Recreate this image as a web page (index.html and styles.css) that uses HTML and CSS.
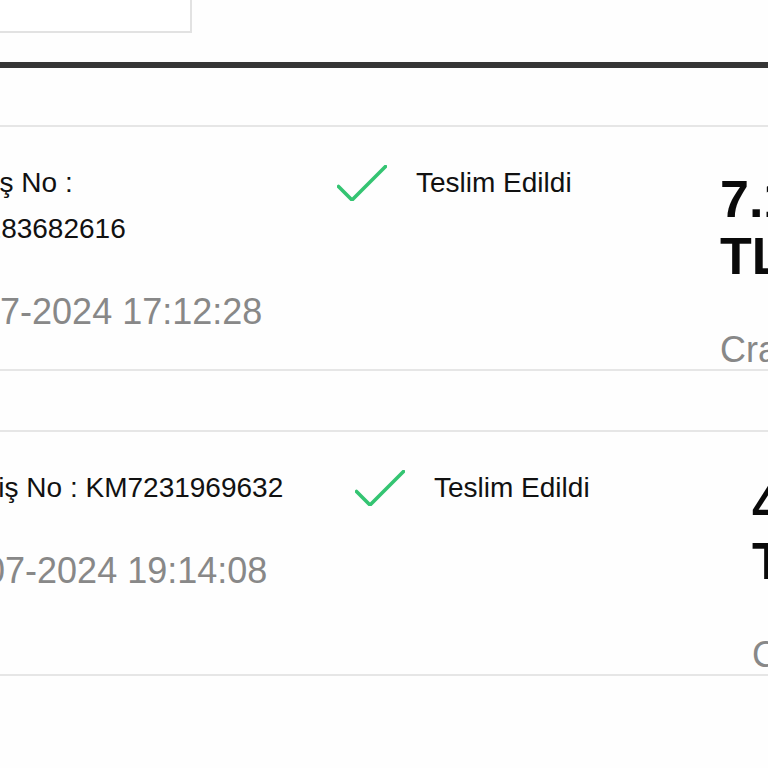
FILE: index.html
```html
<!DOCTYPE html>
<html lang="tr">
<head>
<meta charset="utf-8">
<title>Siparişlerim</title>
<link rel="stylesheet" href="styles.css">
</head>
<body>
<div class="page">
  <div class="toolbar">
    <div class="field"></div>
  </div>
  <div class="divider"></div>
  <div class="orders">
    <div class="card card--one">
      <div class="info">
        <div class="order-no">Sipariş No : KM7283682616</div>
        <div class="date">12-07-2024 17:12:28</div>
      </div>
      <div class="status">
        <svg class="check" viewBox="0 0 50 36" width="50" height="36"><path d="M1.5 21.5 L15 35 L48.5 1.5" fill="none" stroke="#34c472" stroke-width="3.6" stroke-linecap="round" stroke-linejoin="round"/></svg>
        <span class="status-text">Teslim Edildi</span>
      </div>
      <div class="amount">
        <div class="price">7.199,90 TL</div>
        <div class="pay">Craft</div>
      </div>
    </div>
    <div class="card card--two">
      <div class="info">
        <div class="order-no">Sipariş No : KM7231969632</div>
        <div class="date">10-07-2024 19:14:08</div>
      </div>
      <div class="status">
        <svg class="check" viewBox="0 0 50 36" width="50" height="36"><path d="M1.5 21.5 L15 35 L48.5 1.5" fill="none" stroke="#34c472" stroke-width="3.6" stroke-linecap="round" stroke-linejoin="round"/></svg>
        <span class="status-text">Teslim Edildi</span>
      </div>
      <div class="amount">
        <div class="price">4.899,00 TL</div>
        <div class="pay">Craft</div>
      </div>
    </div>
  </div>
</div>
</body>
</html>
```

FILE: styles.css
```css
html, body {
  margin: 0;
  padding: 0;
  overflow: hidden;
  background: #fefefe;
}
body {
  font-family: "Liberation Sans", Arial, Helvetica, sans-serif;
  color: #111;
}
.page {
  width: 768px;
  height: 768px;
  overflow: hidden;
}
.toolbar {
  height: 33px;
}
.field {
  width: 192px;
  height: 33px;
  box-sizing: border-box;
  border-right: 2px solid #e2e2e2;
  border-bottom: 2px solid #e2e2e2;
  background: #fff;
}
.divider {
  margin-top: 29px;
  height: 6px;
  background: #363636;
}
.orders {
  margin-top: 57px;
  margin-left: -72px;
  width: 1200px;
}
.card {
  display: flex;
  align-items: flex-start;
  box-sizing: border-box;
  border-top: 2px solid #e6e6e6;
  border-bottom: 2px solid #e6e6e6;
  padding: 33px 0 1px 0;
  margin-bottom: 59px;
}
.info {
  flex: 0 0 auto;
}
.card--one .info {
  width: 409px;
}
.card--one .order-no {
  max-width: 340px;
}
.card--two {
  padding-left: 5px;
}
.card--two .info {
  width: 422px;
}
.order-no {
  font-size: 28px;
  line-height: 46px;
}
.date {
  margin-top: 40px;
  font-size: 36px;
  line-height: 40px;
  color: #888888;
  white-space: nowrap;
}
.status {
  flex: 0 0 auto;
  display: flex;
  align-items: flex-start;
  gap: 29px;
}
.card--one .status {
  width: 383px;
}
.card--two .status {
  width: 397px;
}
.check {
  display: block;
  margin-top: 5px;
  flex: 0 0 auto;
}
.status-text {
  font-size: 28px;
  line-height: 46px;
  white-space: nowrap;
}
.amount {
  flex: 0 0 auto;
  width: 220px;
  margin-top: 11px;
}
.price {
  font-size: 52px;
  line-height: 57px;
  font-weight: 700;
  color: #0a0a0a;
}
.pay {
  margin-top: 47px;
  font-size: 36px;
  line-height: 36px;
  color: #888888;
}
```
